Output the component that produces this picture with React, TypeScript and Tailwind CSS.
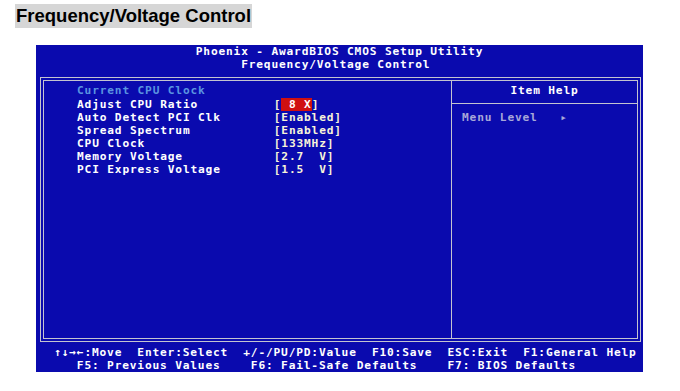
const ITEMS = [
  { label: "Adjust CPU Ratio", value: "8 X" },
  { label: "Auto Detect PCI Clk", value: "[Enabled]" },
  { label: "Spread Spectrum", value: "[Enabled]" },
  { label: "CPU Clock", value: "[133MHz]" },
  { label: "Memory Voltage", value: "[2.7  V]" },
  { label: "PCI Express Voltage", value: "[1.5  V]" },
];

const FOOT_1 = "  ↑↓→←:Move  Enter:Select  +/-/PU/PD:Value  F10:Save  ESC:Exit  F1:General Help";
const FOOT_2 = "     F5: Previous Values    F6: Fail-Safe Defaults    F7: BIOS Defaults";

export default function App() {
  return (
    <div className="h-[391px] w-[680px] overflow-hidden bg-white">
      <div className="ml-[15px] mt-[4px] inline-block h-[24px] bg-[#d6d6d6] px-[1px] font-['Liberation_Sans',Arial,sans-serif] text-[18.5px] font-bold leading-[24px] text-black">
        Frequency/Voltage Control
      </div>

      <div className="ml-[36px] mt-[17px] flex h-[327px] w-[607px] flex-col bg-[#0a0aae] font-['DejaVu_Sans_Mono',monospace] text-[11.2px] font-bold leading-[13.08px] tracking-[0.83px] text-white">
        {/* title */}
        <div className="h-[32px] whitespace-pre text-center">
          <div>Phoenix - AwardBIOS CMOS Setup Utility</div>
          <div>{"Frequency/Voltage Control "}</div>
        </div>

        {/* double frame */}
        <div className="ml-[4px] mr-[2px] h-[265px] border border-[#c4c4d0] p-[2px]">
          <div className="flex h-full border border-[#c4c4d0]">
            <div className="w-[407px] pl-[33px] pt-[3.5px]">
              <div className="text-[#5a94e0]">Current CPU Clock</div>
              {ITEMS.map((item, i) => (
                <div key={item.label} className="flex whitespace-pre">
                  <span className="w-[196.8px]">{item.label}</span>
                  {i === 0 ? (
                    <span className="text-[#f8f4d8]">
                      [<span className="bg-[#d01010] text-white"> 8 X</span>]
                    </span>
                  ) : (
                    <span className="text-[#f8f4d8]">{item.value}</span>
                  )}
                </div>
              ))}
            </div>
            <div className="flex flex-1 flex-col border-l border-[#c4c4d0]">
              <div className="h-[23px] border-b border-[#c4c4d0] pt-[3.5px] text-center">Item Help</div>
              <div className="whitespace-pre pl-[10px] pt-[7px] text-[#a8a8d8]">Menu Level   ▸</div>
            </div>
          </div>
        </div>

        {/* key help */}
        <div className="whitespace-pre pl-[3px] pt-[4px]">
          <div>{FOOT_1}</div>
          <div>{FOOT_2}</div>
        </div>
      </div>
    </div>
  );
}
